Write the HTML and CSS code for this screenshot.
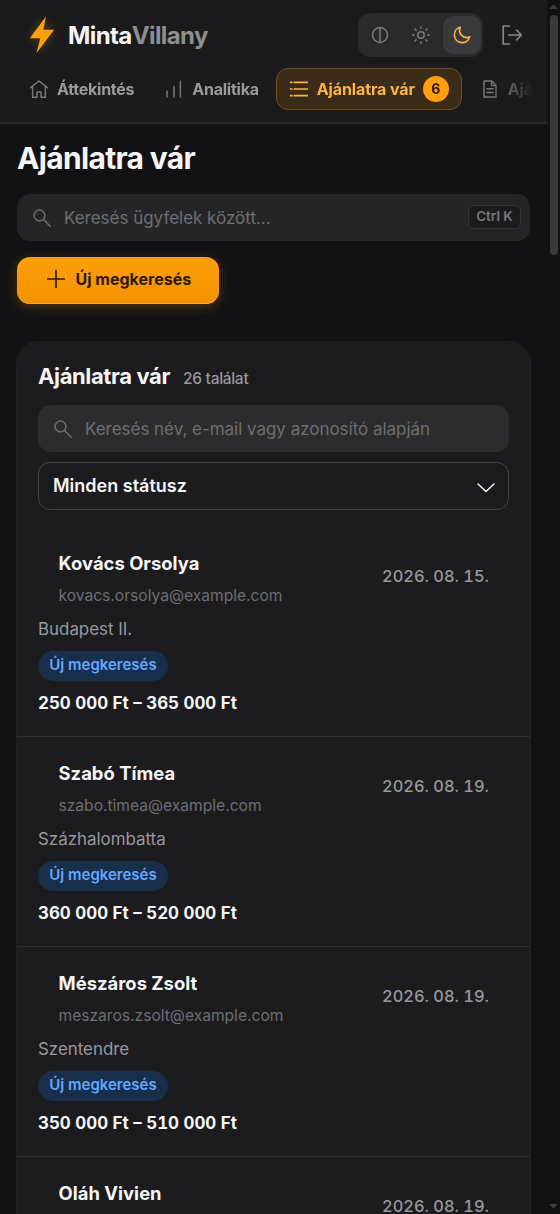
FILE: index.html
```html
<!DOCTYPE html>
<html lang="hu">
<head>
<meta charset="utf-8">
<title>MintaVillany – Ajánlatra vár</title>
<link rel="stylesheet" href="styles.css">
</head>
<body>
<div class="window">
<div class="page">
  <header class="header">
    <div class="topbar">
      <div class="brand">
        <svg class="bolt" width="26" height="38" viewBox="0 0 26 38"><path d="M17 0.5 L0.8 22.2 L11.3 22.2 L7.4 37.2 L25.2 13.8 L14.3 13.8 Z" fill="#ff9f0a"/></svg>
        <span class="brand-name">Minta<span class="brand-soft">Villany</span></span>
      </div>
      <div class="actions">
        <div class="theme">
          <button class="theme-btn"><svg class="icon" width="18" height="18" viewBox="0 0 18 18"><circle cx="9" cy="9" r="7.5"/><path d="M9 1.5v15"/></svg></button>
          <button class="theme-btn"><svg class="icon" width="18" height="18" viewBox="0 0 18 18"><circle cx="9" cy="9" r="3.2"/><path d="M9 .6v1.7M9 15.7v1.7M.6 9h1.7M15.7 9h1.7M3.1 3.1l1.1 1.1M13.8 13.8l1.1 1.1M3.1 14.9l1.1-1.1M13.8 4.2l1.1-1.1"/></svg></button>
          <button class="theme-btn theme-on"><svg class="icon" width="18" height="18" viewBox="0 0 18 18"><path d="M7.2 1.3A7.8 7.8 0 1 0 16.7 10.9A7.3 7.3 0 0 1 7.2 1.3Z"/></svg></button>
        </div>
        <svg class="icon logout" width="20" height="20" viewBox="0 0 20 20"><path d="M7.3 1H1.2v18h6.1M6.8 10h12.3M14.6 5.2l4.8 4.8l-4.8 4.8"/></svg>
      </div>
    </div>
    <nav class="nav">
      <a class="tab"><svg class="icon" width="18" height="18" viewBox="0 0 18 18"><path d="M.7 7.7L9 1l8.3 6.7M2.6 6.5v10.8h4.3v-5.4h4.2v5.4h4.3V6.5"/></svg><span>Áttekintés</span></a>
      <a class="tab tab-chart"><svg class="icon" width="18" height="18" viewBox="0 0 18 18"><path d="M2 17v-6M9 17V6.5M15.4 17V1.3"/></svg><span>Analitika</span></a>
      <a class="tab tab-on"><svg class="icon" width="18" height="18" viewBox="0 0 18 18"><path d="M4.3 2.3H18M4.3 9H18M4.3 15.7H18M.3 2.3h1.6M.3 9h1.6M.3 15.7h1.6"/></svg><span>Ajánlatra vár</span><b class="count">6</b></a>
      <a class="tab tab-last"><svg class="icon" width="14" height="18" viewBox="0 0 14 18"><path d="M1 1h7.8L13 5.3V17H1ZM8.6 1v4.6H13M4 8.8h6M4 12.6h6"/></svg><span>Ajá</span></a>
    </nav>
  </header>
  <main class="main">
    <h1 class="title">Ajánlatra vár</h1>
    <div class="search">
      <svg class="icon" width="18" height="18" viewBox="0 0 18 18"><circle cx="6.5" cy="6.5" r="5.4"/><path d="M10.5 10.5l6.7 6.7"/></svg>
      <span class="placeholder">Keresés ügyfelek között...</span>
      <kbd class="kbd">Ctrl K</kbd>
    </div>
    <button class="primary"><svg class="icon" width="18" height="18" viewBox="0 0 18 18"><path d="M9 .7v16.6M.7 9h16.6"/></svg><span>Új megkeresés</span></button>
    <section class="card">
      <div class="card-top">
        <div class="card-head"><h2 class="card-title">Ajánlatra vár</h2><span class="hits">26 találat</span></div>
        <div class="search search-card">
          <svg class="icon" width="18" height="18" viewBox="0 0 18 18"><circle cx="6.5" cy="6.5" r="5.4"/><path d="M10.5 10.5l6.7 6.7"/></svg>
          <span class="placeholder wide">Keresés név, e-mail vagy azonosító alapján</span>
        </div>
        <div class="select"><span>Minden státusz</span><svg class="icon chevron" width="18" height="10" viewBox="0 0 18 10"><path d="M1 1l8 7.5L17 1"/></svg></div>
      </div>
      <article class="row">
        <div class="person"><div><div class="name">Kovács Orsolya</div><div class="mail">kovacs.orsolya@example.com</div></div><time class="date">2026. 08. 15.</time></div>
        <div class="city">Budapest II.</div><span class="pill">Új megkeresés</span><div class="price">250 000 Ft – 365 000 Ft</div>
      </article>
      <article class="row">
        <div class="person"><div><div class="name">Szabó Tímea</div><div class="mail">szabo.timea@example.com</div></div><time class="date">2026. 08. 19.</time></div>
        <div class="city">Százhalombatta</div><span class="pill">Új megkeresés</span><div class="price">360 000 Ft – 520 000 Ft</div>
      </article>
      <article class="row">
        <div class="person"><div><div class="name">Mészáros Zsolt</div><div class="mail">meszaros.zsolt@example.com</div></div><time class="date">2026. 08. 19.</time></div>
        <div class="city">Szentendre</div><span class="pill">Új megkeresés</span><div class="price">350 000 Ft – 510 000 Ft</div>
      </article>
      <article class="row">
        <div class="person"><div><div class="name">Oláh Vivien</div></div><time class="date">2026. 08. 19.</time></div>
      </article>
    </section>
  </main>
</div>
<div class="scrollbar">
  <svg width="9" height="6" viewBox="0 0 9 6"><path d="M4.5 .3L8.6 5H.4Z"/></svg>
  <div class="thumb"></div>
  <svg width="9" height="6" viewBox="0 0 9 6"><path d="M4.5 5.7L8.6 1H.4Z"/></svg>
</div>
</div>
</body>
</html>
```
FILE: styles.css
```css
* { box-sizing: border-box; }
body { margin: 0; background: #121214; color: #f5f5f7; font-family: Inter, "Liberation Sans", sans-serif; }
h1, h2 { margin: 0; }
button { border: 0; font: inherit; padding: 0; }
.window { display: flex; height: 1214px; overflow: hidden; }
.page { width: 547px; height: 1214px; overflow: hidden; }
.icon { display: block; flex: none; fill: none; stroke: currentColor; stroke-width: 1.5; stroke-linecap: round; stroke-linejoin: round; }

.header { height: 124px; background: #1b1b1d; border-bottom: 2px solid #29292c; padding-top: 13px; }
.topbar { display: flex; justify-content: space-between; height: 44px; padding: 0 25px 0 29px; }
.brand { display: flex; align-items: center; gap: 13px; }
.bolt { filter: drop-shadow(0 0 5px rgba(255, 159, 10, .3)); overflow: visible; }
.brand-name { font-size: 24px; font-weight: 700; letter-spacing: -.6px; }
.brand-soft { color: #8e8e90; font-weight: 650; }
.actions { display: flex; align-items: center; gap: 19px; }
.theme { display: flex; gap: 3px; width: 125px; height: 44px; padding: 3px 2px 3px 3px; border-radius: 12px; background: #2a2a2d; }
.theme-btn { display: flex; align-items: center; justify-content: center; width: 38px; border-radius: 10px; background: none; color: #77777c; }
.theme-btn.theme-on { background: #3a3a3d; color: #ffb340; }
.theme-on .icon, .tab-on .icon { stroke-width: 1.7; }
.logout { color: #85858b; stroke-width: 1.7; }
.nav { display: flex; height: 42px; margin-top: 11px; padding-left: 30px; width: 536px; overflow: hidden; -webkit-mask-image: linear-gradient(to right, #000 490px, transparent 533px); mask-image: linear-gradient(to right, #000 490px, transparent 533px); }
.tab { display: flex; flex: none; align-items: center; gap: 9px; color: #9a9aa1; font-size: 16px; font-weight: 650; letter-spacing: -.25px; white-space: nowrap; }
.tab .icon { color: #77777c; }
.tab-chart { margin-left: 31px; }
.tab-on { width: 186px; margin-left: 17px; padding-left: 13px; border: 1px solid #76501b; border-radius: 12px; background: #3b2c19; color: #ffb340; letter-spacing: -.12px; }
.tab-on .icon { color: #ffb340; }
.count { width: 26px; height: 26px; margin-left: -1px; border-radius: 50%; background: #ff9f0a; color: #2b1a00; font-size: 14px; line-height: 26px; text-align: center; font-weight: 700; }
.tab-last { margin-left: 21px; gap: 11px; }

.main { padding: 17px 16px 0 17px; }
.title { font-size: 30px; line-height: 35px; font-weight: 700; letter-spacing: -.67px; }
.search { display: flex; align-items: center; gap: 13px; width: 513px; height: 47px; margin: 18px 0 0; padding: 0 9px 0 16px; border-radius: 13px; background: #252527; color: #6e6e74; }
.placeholder { flex: 1; font-size: 17px; letter-spacing: -.02px; }
.kbd { width: 53px; height: 24px; margin-top: -2px; border: 1px solid #343437; border-radius: 6px; background: #1c1c1e; color: #77777c; font: 600 13.5px/21px Inter, sans-serif; text-align: center; }
.primary { display: flex; align-items: center; gap: 11px; width: 202px; height: 47px; margin-top: 16px; padding: 0 0 3px 29.5px; border-radius: 13px; background: linear-gradient(#ff9f0a, #f39200); box-shadow: 0 3px 12px rgba(255, 159, 10, .25), inset 0 -1px 0 #ffa826; color: #2b1a00; font-size: 16px; font-weight: 650; letter-spacing: 0; }
.primary .icon { stroke-width: 1.7; }

.card { height: 1000px; width: 515px; margin: 37px 0 0 -1px; border: 1px solid #202022; border-radius: 23px; background: #1c1c1e; }
.card-top { padding: 20px 21px 0; }
.card-head { display: flex; align-items: baseline; gap: 13px; height: 28px; }
.card-title { font-size: 22px; line-height: 28px; font-weight: 700; letter-spacing: -.38px; }
.hits { color: #98989f; font-size: 15.5px; font-weight: 550; letter-spacing: -.3px; }
.search-card { width: auto; margin-top: 15px; padding-left: 16px; background: #2c2c2e; }
.placeholder.wide { letter-spacing: -.03px; }
.select { display: flex; align-items: center; justify-content: space-between; height: 48px; margin-top: 10px; padding: 0 13px 1px 14px; border: 1px solid #434346; border-radius: 12px; font-size: 18px; font-weight: 570; letter-spacing: 0; }
.chevron { margin-top: 4px; }
.row { height: 210px; padding: 23px 20px 0 21px; border-bottom: 1px solid #2e2e31; }
.card-top + .row { margin-top: 17px; }
.person { display: flex; justify-content: space-between; align-items: flex-start; height: 67px; padding: 0 21px 0 20.5px; }
.name { font-size: 18.4px; line-height: 26px; font-weight: 650; letter-spacing: .03px; }
.mail { margin-top: 8px; color: #6e6e74; font-size: 15.6px; line-height: 24px; }
.date { margin-top: 14px; color: #98989f; font-size: 16.4px; font-weight: 450; line-height: 24px; font-variant-numeric: tabular-nums; }
.city { color: #98989f; font-size: 16.9px; line-height: 25px; }
.pill { display: block; width: 130px; height: 30px; margin-top: 9px; border-radius: 15px; background: #182f4c; color: #64a8ff; font-size: 15px; font-weight: 600; line-height: 28px; text-align: center; }
.price { margin-top: 10px; font-size: 16.9px; line-height: 24px; font-weight: 650; font-variant-numeric: tabular-nums; }

.scrollbar { display: flex; flex-direction: column; align-items: center; width: 13px; height: 1214px; padding: 4px 0 5px; background: #121214; }
.scrollbar svg { fill: #3e3e42; flex: none; }
.thumb { width: 8px; height: 240px; margin: 5px 0 auto; border-radius: 4px; background: #3a3a3d; }
```
